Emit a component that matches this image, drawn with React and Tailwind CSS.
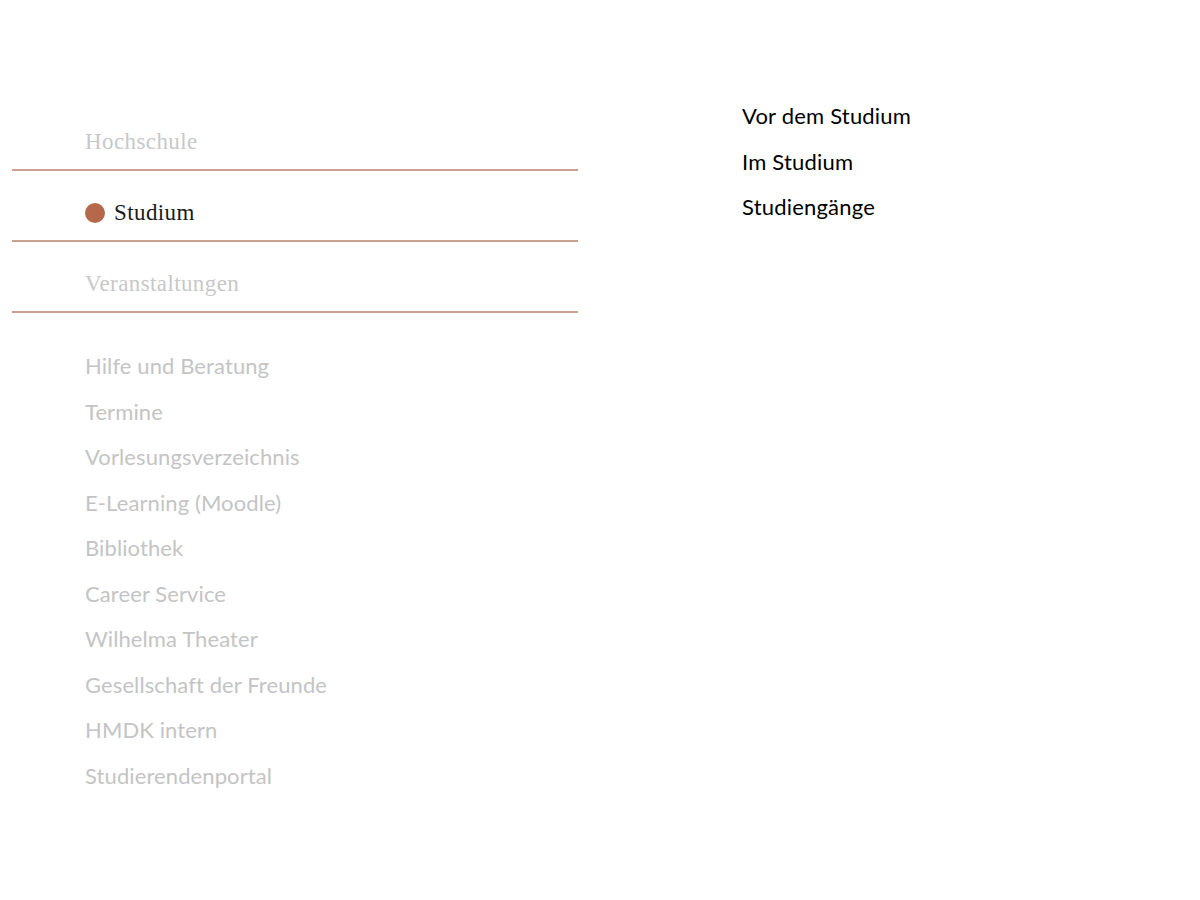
import React from 'react';

const mainItems = [
  { label: 'Hochschule', active: false },
  { label: 'Studium', active: true },
  { label: 'Veranstaltungen', active: false },
];

const serviceLinks = [
  'Hilfe und Beratung',
  'Termine',
  'Vorlesungsverzeichnis',
  'E-Learning (Moodle)',
  'Bibliothek',
  'Career Service',
  'Wilhelma Theater',
  'Gesellschaft der Freunde',
  'HMDK intern',
  'Studierendenportal',
];

const subItems = ['Vor dem Studium', 'Im Studium', 'Studiengänge'];

const App = () => {
  return (
    <div className="min-h-screen w-full bg-white flex">
      {/* Left column - main navigation */}
      <div className="w-[566px] ml-[12px] pt-[100px] flex flex-col">
        {mainItems.map((item) => (
          <div
            key={item.label}
            className="h-[71px] pt-[27px] border-b-2 border-[#c9a291] pl-[73px]"
          >
            <div className="flex items-center h-[30px] gap-[9px]">
              {item.active && (
                <span className="w-[20px] h-[20px] rounded-full bg-[#b5694a] shrink-0" />
              )}
              <span
                className={`font-['Liberation_Serif',serif] text-[23px] tracking-[0.4px] leading-[30px] ${
                  item.active ? 'text-[#1a1a1a]' : 'text-[#c8c8c8]'
                }`}
              >
                {item.label}
              </span>
            </div>
          </div>
        ))}

        {/* Service links */}
        <ul className="mt-[30px] pl-[73px] flex flex-col">
          {serviceLinks.map((link) => (
            <li
              key={link}
              className="h-[45.5px] flex items-center font-['Lato',sans-serif] text-[22px] tracking-[0.1px] text-[#c4c4c4]"
            >
              {link}
            </li>
          ))}
        </ul>
      </div>

      {/* Right column - sub navigation */}
      <ul className="ml-[164px] pt-[93px] flex flex-col">
        {subItems.map((item) => (
          <li
            key={item}
            className="h-[45.5px] flex items-center font-['Lato',sans-serif] text-[22px] tracking-[0.2px] text-black"
          >
            {item}
          </li>
        ))}
      </ul>
    </div>
  );
};

export default App;
